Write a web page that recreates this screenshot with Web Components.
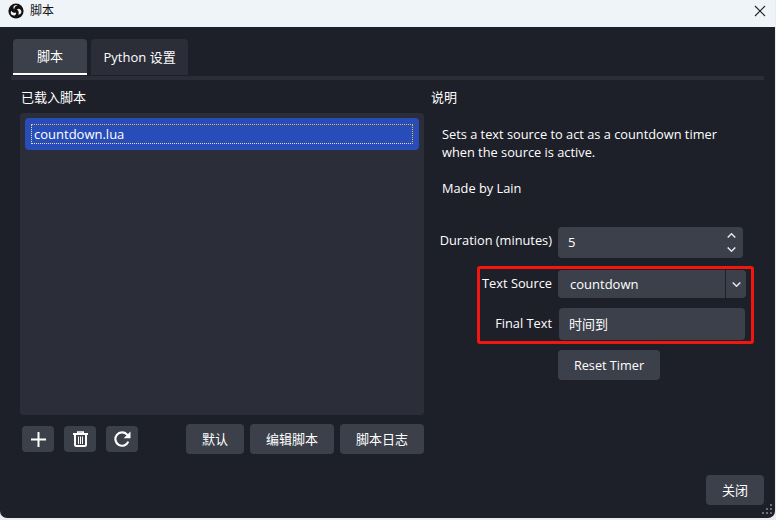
<!DOCTYPE html>
<html>
<head>
<meta charset="utf-8">
<title>脚本</title>
<style>
  html, body { margin: 0; padding: 0; background: #e9edf2; }
  body { font: 13px "Open Sans", "Noto Sans CJK SC", sans-serif; }
</style>
</head>
<body>
<obs-window caption="脚本">
  <obs-tabs>
    <obs-tab active>脚本</obs-tab>
    <obs-tab>Python 设置</obs-tab>
  </obs-tabs>
  <scripts-page>
    <loaded-scripts slot="left">
      <script-item>countdown.lua</script-item>
    </loaded-scripts>
    <script-settings slot="right"></script-settings>
  </scripts-page>
</obs-window>

<script>
const FONT = '"Open Sans", "Noto Sans CJK SC", sans-serif';

class ObsWindow extends HTMLElement {
  constructor() {
    super();
    const shadow = this.attachShadow({mode: 'open'});
    shadow.innerHTML = `
<style>
  :host {
    display: flex;
    flex-direction: column;
    position: relative;
    width: 775px;
    height: 518px;
    background: #1e2029;
    border-radius: 0 0 7px 7px;
    overflow: hidden;
    color: #fff;
    font: 13px ${FONT};
  }
  .titlebar {
    display: flex;
    align-items: center;
    gap: 6px;
    height: 27px;
    padding: 0 9px 5px 8px;
    box-sizing: border-box;
    background: #eff4f9;
    color: #111;
    font-size: 12px;
    flex: none;
  }
  .titlebar span { flex: 1; padding-bottom: 2px; }
  .body { flex: 1; display: flex; flex-direction: column; padding: 12px 11px 13px; min-height: 0; }
  .footer { display: flex; justify-content: flex-end; }
  .grip { position: absolute; right: 1px; bottom: 2px; }
</style>
<div class="titlebar">
  <svg width="16" height="16" viewBox="0 0 16 16">
    <circle cx="8" cy="8" r="7.6" fill="#111"/>
    <path d="M9.800 2.600a3 3 0 0 0-4.400 1.200 3 3 0 0 0 .9 2.700 3.400 3.400 0 0 1 3.500-3.900z" fill="#f2f2f2"/>
    <path d="M2.900 10.700a3 3 0 0 0 4.400 1.300 3 3 0 0 0 .8-2.600 3.400 3.400 0 0 1-4.700-1.700 3 3 0 0 0-.5 3z" fill="#f2f2f2"/>
    <path d="M13 10.200a3 3 0 0 0-1.500-4.300 3 3 0 0 0-2.600.6 3.400 3.400 0 0 1 1.200 5 3 3 0 0 0 2.900-1.300z" fill="#f2f2f2"/>
  </svg>
  <span></span>
  <svg width="12" height="12" viewBox="0 0 12 12"><path d="M1 1l10 10M11 1L1 11" stroke="#222" stroke-width="1.100" fill="none"/></svg>
</div>
<div class="body">
  <slot></slot>
  <div class="footer"><obs-button wide>关闭</obs-button></div>
</div>
<svg class="grip" width="12" height="12" viewBox="0 0 12 12" fill="#6b6e76">
  <rect x="8" y="0" width="2" height="2"/><rect x="4" y="4" width="2" height="2"/><rect x="8" y="4" width="2" height="2"/>
  <rect x="0" y="8" width="2" height="2"/><rect x="4" y="8" width="2" height="2"/><rect x="8" y="8" width="2" height="2"/>
</svg>
`;
    shadow.querySelector('span').textContent = this.getAttribute('caption');
  }
}

class ObsTabs extends HTMLElement {
  constructor() {
    super();
    this.attachShadow({mode: 'open'}).innerHTML = `
<style>
  :host { display: block; flex: none; border-bottom: 4px solid #2b2e38; }
  .row { display: flex; gap: 4px; padding-left: 2px; }
</style>
<div class="row"><slot></slot></div>
`;
  }
}

class ObsTab extends HTMLElement {
  constructor() {
    super();
    this.attachShadow({mode: 'open'}).innerHTML = `
<style>
  :host {
    display: block;
    height: 36px;
    line-height: 36px;
    padding: 0 12.500px;
    background: #2b2e38;
    border-radius: 4px 4px 0 0;
    margin-bottom: 1px;
    box-sizing: border-box;
    font-size: 13px;
  }
  :host([active]) {
    background: #3c404b;
    padding: 0 24px;
    border-bottom: 2px solid #fff;
    line-height: 34px;
  }
</style>
<slot></slot>
`;
  }
}

class ScriptsPage extends HTMLElement {
  constructor() {
    super();
    this.attachShadow({mode: 'open'}).innerHTML = `
<style>
  :host { display: flex; gap: 7px; padding: 10px 0 0 9px; height: 395px; flex: none; box-sizing: border-box; }
  ::slotted([slot=left]) { width: 404px; flex: none; }
  ::slotted([slot=right]) { flex: 1; min-width: 0; }
</style>
<slot name="left"></slot>
<slot name="right"></slot>
`;
  }
}

class LoadedScripts extends HTMLElement {
  constructor() {
    super();
    this.attachShadow({mode: 'open'}).innerHTML = `
<style>
  :host { display: flex; flex-direction: column; }
  .label { height: 23px; line-height: 14px; padding-left: 1px; font-size: 13px; flex: none; }
  .list { height: 302px; flex: none; box-sizing: border-box; padding: 5px; background: #2b2e38; border-radius: 4px; }
  .actions { display: flex; align-items: center; margin-top: 9px; padding-left: 2px; }
  .icons { display: flex; gap: 10px; flex: 1; }
  .buttons { display: flex; gap: 6px; }
</style>
<div class="label">已载入脚本</div>
<div class="list"><slot></slot></div>
<div class="actions">
  <div class="icons">
    <icon-button>
      <svg width="15" height="15" viewBox="0 0 15 15"><path d="M7.500 0v15M0 7.500h15" stroke="#fff" stroke-width="2" fill="none"/></svg>
    </icon-button>
    <icon-button>
      <svg width="15" height="16" viewBox="0 0 15 16" fill="none" stroke="#fff">
        <path d="M0 3h15" stroke-width="2"/>
        <path d="M4.800 3V1h5.400v2" stroke-width="1.600"/>
        <path d="M2 3.500V14a1.200 1.200 0 0 0 1.200 1h8.600a1.200 1.200 0 0 0 1.200-1V3.500" stroke-width="2"/>
        <path d="M5.500 5.500v7.500M7.500 5.500v7.500M9.500 5.500v7.500" stroke-width="1"/>
      </svg>
    </icon-button>
    <icon-button>
      <svg width="17" height="16" viewBox="0 0 17 16" fill="none">
        <path d="M14.300 10.600A6.700 6.700 0 1 1 13 3.500L14.500 5" stroke="#fff" stroke-width="2.100"/>
        <path d="M16.500 0.500V7.300H9.700z" fill="#fff"/>
      </svg>
    </icon-button>
  </div>
  <div class="buttons">
    <obs-button wide>默认</obs-button>
    <obs-button>编辑脚本</obs-button>
    <obs-button>脚本日志</obs-button>
  </div>
</div>
`;
  }
}

class ScriptItem extends HTMLElement {
  constructor() {
    super();
    this.attachShadow({mode: 'open'}).innerHTML = `
<style>
  :host {
    display: block;
    height: 32px;
    padding: 6px;
    box-sizing: border-box;
    background: #284cb8;
    border-radius: 4px;
  }
  .focus {
    height: 20px;
    box-sizing: border-box;
    border: 1px dotted #f0b93c;
    border-left-color: #e6e2c0;
    border-bottom-color: #e6e2c0;
    padding-left: 2px;
    line-height: 18px;
    font-size: 13px;
  }
</style>
<div class="focus"><slot></slot></div>
`;
  }
}

class ObsButton extends HTMLElement {
  constructor() {
    super();
    this.attachShadow({mode: 'open'}).innerHTML = `
<style>
  :host {
    display: block;
    height: 30px;
    line-height: 30px;
    width: 84px;
    text-align: center;
    background: #3c404b;
    border-radius: 4px;
    font-size: 13px;
  }
  :host([wide]) { width: 58px; }
  :host([reset]) { width: 102px; font-size: 12.700px; }
</style>
<slot></slot>
`;
  }
}

class IconButton extends HTMLElement {
  constructor() {
    super();
    this.attachShadow({mode: 'open'}).innerHTML = `
<style>
  :host {
    display: flex;
    align-items: center;
    justify-content: center;
    width: 32px;
    height: 26px;
    background: #3c404b;
    border-radius: 4px;
  }
</style>
<slot></slot>
`;
  }
}

class FormRow extends HTMLElement {
  constructor() {
    super();
    this.attachShadow({mode: 'open'}).innerHTML = `
<style>
  :host { display: flex; gap: 6px; align-items: center; }
  .label { width: 121px; flex: none; text-align: right; white-space: nowrap; font-size: 12.800px; margin-top: var(--label-shift, -3px); }
</style>
<div class="label"></div>
<slot></slot>
`;
    this.shadowRoot.querySelector('.label').textContent = this.getAttribute('label') || '';
  }
}

class FieldBox extends HTMLElement {
  constructor() {
    super();
    this.attachShadow({mode: 'open'}).innerHTML = `
<style>
  :host {
    display: flex;
    align-items: center;
    box-sizing: border-box;
    background: #3c404b;
    border-radius: 4px;
    padding-left: 12px;
    font-size: 13px;
  }
  .text { flex: 1; padding-bottom: var(--text-lift, 0); }
</style>
<span class="text"><slot></slot></span>
<slot name="end"></slot>
`;
  }
}

class ScriptSettings extends HTMLElement {
  constructor() {
    super();
    this.attachShadow({mode: 'open'}).innerHTML = `
<style>
  :host { display: flex; flex-direction: column; font-size: 12.800px; }
  .label { height: 27px; line-height: 14px; font-size: 13px; flex: none; }
  .desc { padding: 8px 0 0 11px; line-height: 18px; font-size: 12.800px; height: 102px; }
  .desc p { margin: 0 0 18px; }
  .form { display: flex; flex-direction: column; }
  .annotated { position: relative; display: flex; flex-direction: column; gap: 10px; margin-top: 12px; }
  .mark {
    position: absolute;
    left: 46px;
    top: -4px;
    width: 277px;
    height: 78px;
    box-sizing: border-box;
    border: 3px solid #f4150f;
    border-radius: 3px;
  }
  .spin { width: 24px; display: flex; flex-direction: column; align-items: center; gap: 9px; }
  .combo-end {
    width: 21px;
    height: 28px;
    border-left: 1px solid #1e2029;
    display: flex;
    align-items: center;
    justify-content: center;
    box-sizing: border-box;
  }
  .reset { margin: 10px 0 0 127px; }
  .duration-row { --label-shift: -5px; }
  .duration { width: 185px; height: 31px; padding-left: 10px; --text-lift: 2px; }
  .source { width: 188px; height: 28px; }
  .final { width: 186px; height: 32px; margin-left: 1px; padding-left: 10px; --text-lift: 2px; }
</style>
<div class="label">说明</div>
<div class="desc">
  <p>Sets a text source to act as a countdown timer<br>when the source is active.</p>
  <p>Made by Lain</p>
</div>
<div class="form">
  <form-row class="duration-row" label="Duration (minutes)">
    <field-box class="duration">5
      <div class="spin" slot="end">
        <svg width="9" height="5" viewBox="0 0 9 5"><path d="M.7 4.500L4.500.8l3.800 3.700" stroke="#e4e6e9" stroke-width="1.500" fill="none"/></svg>
        <svg width="9" height="5" viewBox="0 0 9 5"><path d="M.7.500l3.800 3.700L8.300.5" stroke="#e4e6e9" stroke-width="1.500" fill="none"/></svg>
      </div>
    </field-box>
  </form-row>
  <div class="annotated">
    <form-row label="Text Source">
      <field-box class="source">countdown
        <div class="combo-end" slot="end">
          <svg width="9" height="5" viewBox="0 0 9 5"><path d="M.7.500l3.800 3.700L8.300.5" stroke="#e4e6e9" stroke-width="1.500" fill="none"/></svg>
        </div>
      </field-box>
    </form-row>
    <form-row label="Final Text">
      <field-box class="final">时间到</field-box>
    </form-row>
    <div class="mark"></div>
  </div>
  <obs-button reset class="reset">Reset Timer</obs-button>
</div>
`;
  }
}

customElements.define('obs-window', ObsWindow);
customElements.define('obs-tabs', ObsTabs);
customElements.define('obs-tab', ObsTab);
customElements.define('scripts-page', ScriptsPage);
customElements.define('loaded-scripts', LoadedScripts);
customElements.define('script-item', ScriptItem);
customElements.define('obs-button', ObsButton);
customElements.define('icon-button', IconButton);
customElements.define('form-row', FormRow);
customElements.define('field-box', FieldBox);
customElements.define('script-settings', ScriptSettings);
</script>
</body>
</html>
